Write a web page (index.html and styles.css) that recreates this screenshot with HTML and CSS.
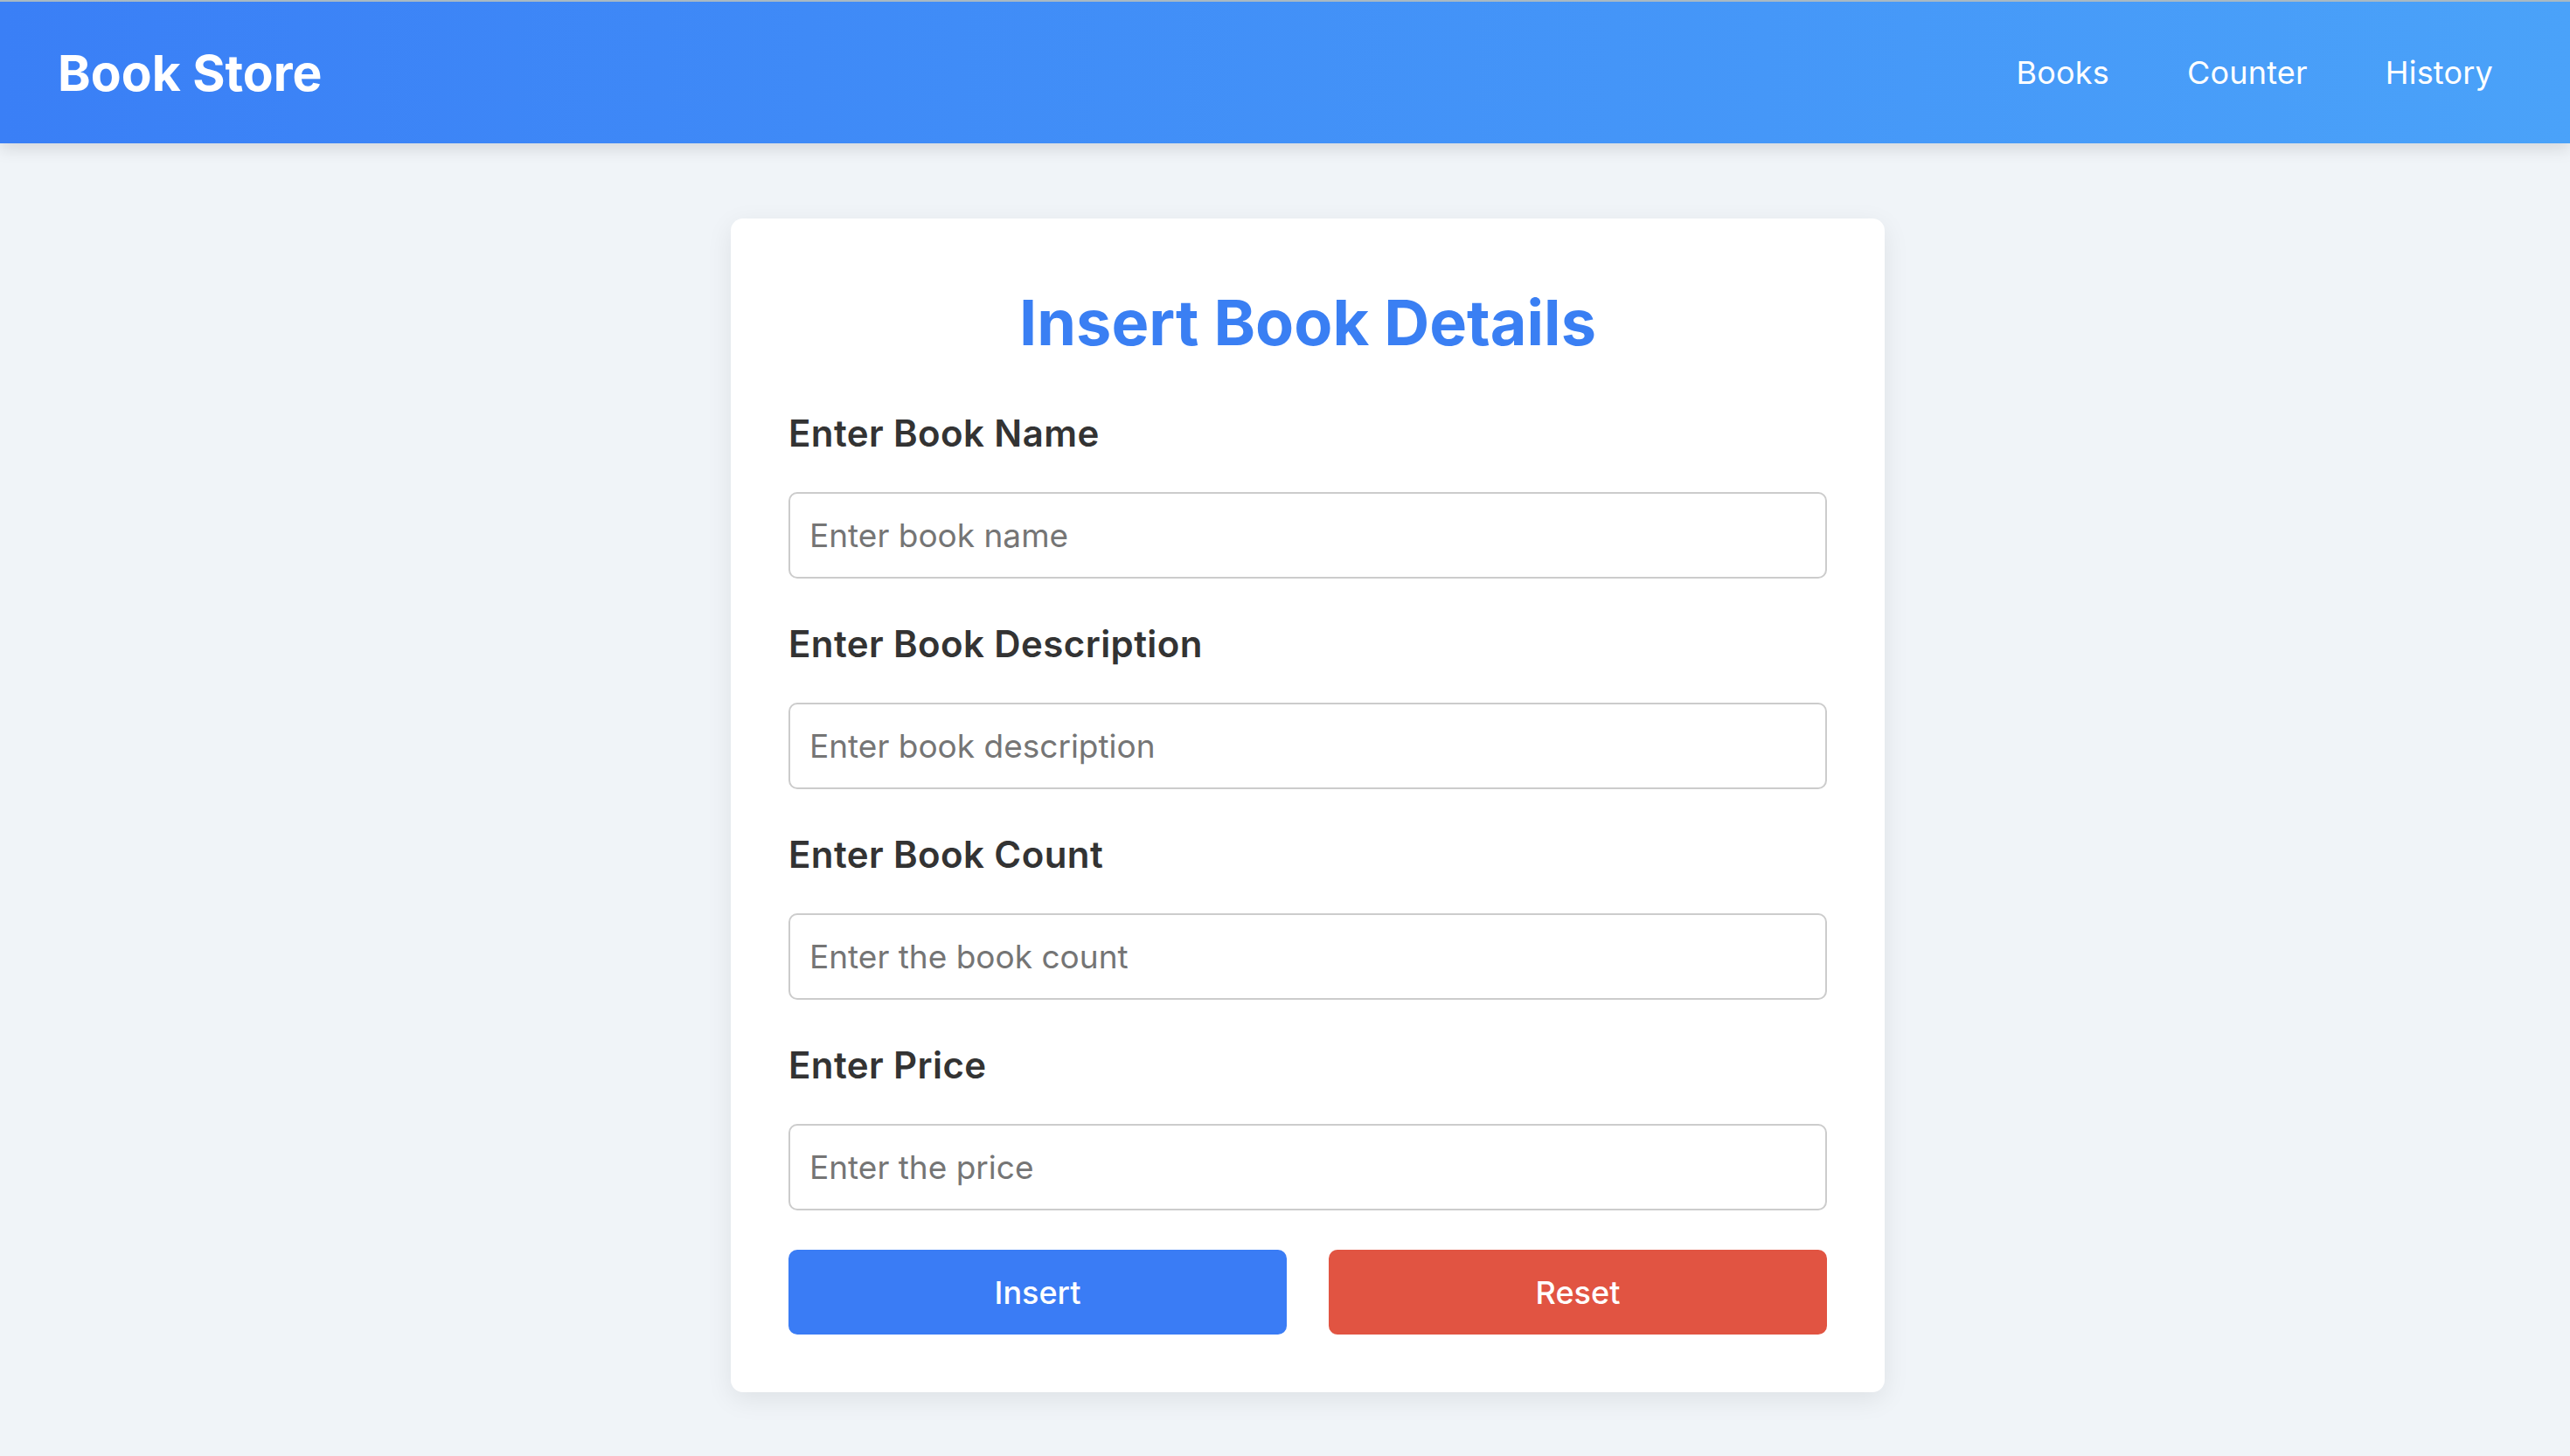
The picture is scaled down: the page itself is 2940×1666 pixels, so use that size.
FILE: index.html
```html
<!DOCTYPE html>
<html lang="en">
<head>
<meta charset="utf-8">
<title>Book Store</title>
<link rel="stylesheet" href="styles.css">
</head>
<body>
<header class="navbar">
  <div class="brand">Book Store</div>
  <nav class="nav-links">
    <a href="#" class="nav-link">Books</a>
    <a href="#" class="nav-link">Counter</a>
    <a href="#" class="nav-link">History</a>
  </nav>
</header>
<main class="page">
  <form class="card">
    <h1 class="card-title">Insert Book Details</h1>
    <div class="field">
      <label class="field-label" for="name">Enter Book Name</label>
      <input class="field-input" id="name" type="text" placeholder="Enter book name">
    </div>
    <div class="field">
      <label class="field-label" for="desc">Enter Book Description</label>
      <input class="field-input" id="desc" type="text" placeholder="Enter book description">
    </div>
    <div class="field">
      <label class="field-label" for="count">Enter Book Count</label>
      <input class="field-input" id="count" type="text" placeholder="Enter the book count">
    </div>
    <div class="field field-last">
      <label class="field-label" for="price">Enter Price</label>
      <input class="field-input" id="price" type="text" placeholder="Enter the price">
    </div>
    <div class="actions">
      <button type="button" class="btn btn-insert">Insert</button>
      <button type="reset" class="btn btn-reset">Reset</button>
    </div>
  </form>
</main>
</body>
</html>
```
FILE: styles.css
```css
* {
  box-sizing: border-box;
}

html, body {
  margin: 0;
  padding: 0;
}

body {
  background: #f0f4f8;
  font-family: "Inter", "Open Sans", sans-serif;
  min-height: 1666px;
}

.navbar {
  height: 164px;
  border-top: 2px solid #a9b9c3;
  background: linear-gradient(90deg, #3a7ff6 0%, #4aa2f9 100%);
  display: flex;
  align-items: center;
  justify-content: space-between;
  padding: 0 88px 0 66px;
  box-shadow: 0 6px 18px rgba(0, 0, 0, 0.12);
  position: relative;
  z-index: 1;
}

.brand {
  color: #ffffff;
  font-size: 57px;
  font-weight: 700;
}

.nav-links {
  display: flex;
  gap: 89px;
}

.nav-link {
  color: #ffffff;
  text-decoration: none;
  font-size: 36px;
  font-weight: 400;
  letter-spacing: 0.2px;
}

.page {
  display: flex;
  justify-content: center;
  padding: 86px 0 0 52px;
}

.card {
  width: 1320px;
  background: #ffffff;
  border-radius: 14px;
  box-shadow: 0 8px 30px rgba(0, 0, 0, 0.08);
  padding: 76px 66px 66px;
  display: flex;
  flex-direction: column;
}

.card-title {
  margin: 0 0 60px;
  text-align: center;
  color: #3a7ff3;
  font-size: 72px;
  line-height: 86px;
  font-weight: 700;
}

.field {
  display: flex;
  flex-direction: column;
  margin-bottom: 51px;
}

.field-last {
  margin-bottom: 45px;
}

.field-label {
  color: #333333;
  font-size: 42px;
  line-height: 48px;
  font-weight: 600;
  letter-spacing: 0.4px;
  margin-bottom: 43px;
}

.field-input {
  height: 99px;
  border: 2px solid #cccccc;
  border-radius: 10px;
  padding: 0 22px;
  font-family: inherit;
  font-size: 37px;
  color: #333333;
  background: #ffffff;
  outline: none;
}

.field-input::placeholder {
  color: #757575;
}

.actions {
  display: flex;
  gap: 48px;
}

.btn {
  flex: 1;
  height: 97px;
  border: none;
  border-radius: 10px;
  color: #ffffff;
  font-family: inherit;
  font-size: 36px;
  font-weight: 500;
  cursor: pointer;
}

.btn-insert {
  background: #3a7cf5;
}

.btn-reset {
  background: #e15442;
}
```
